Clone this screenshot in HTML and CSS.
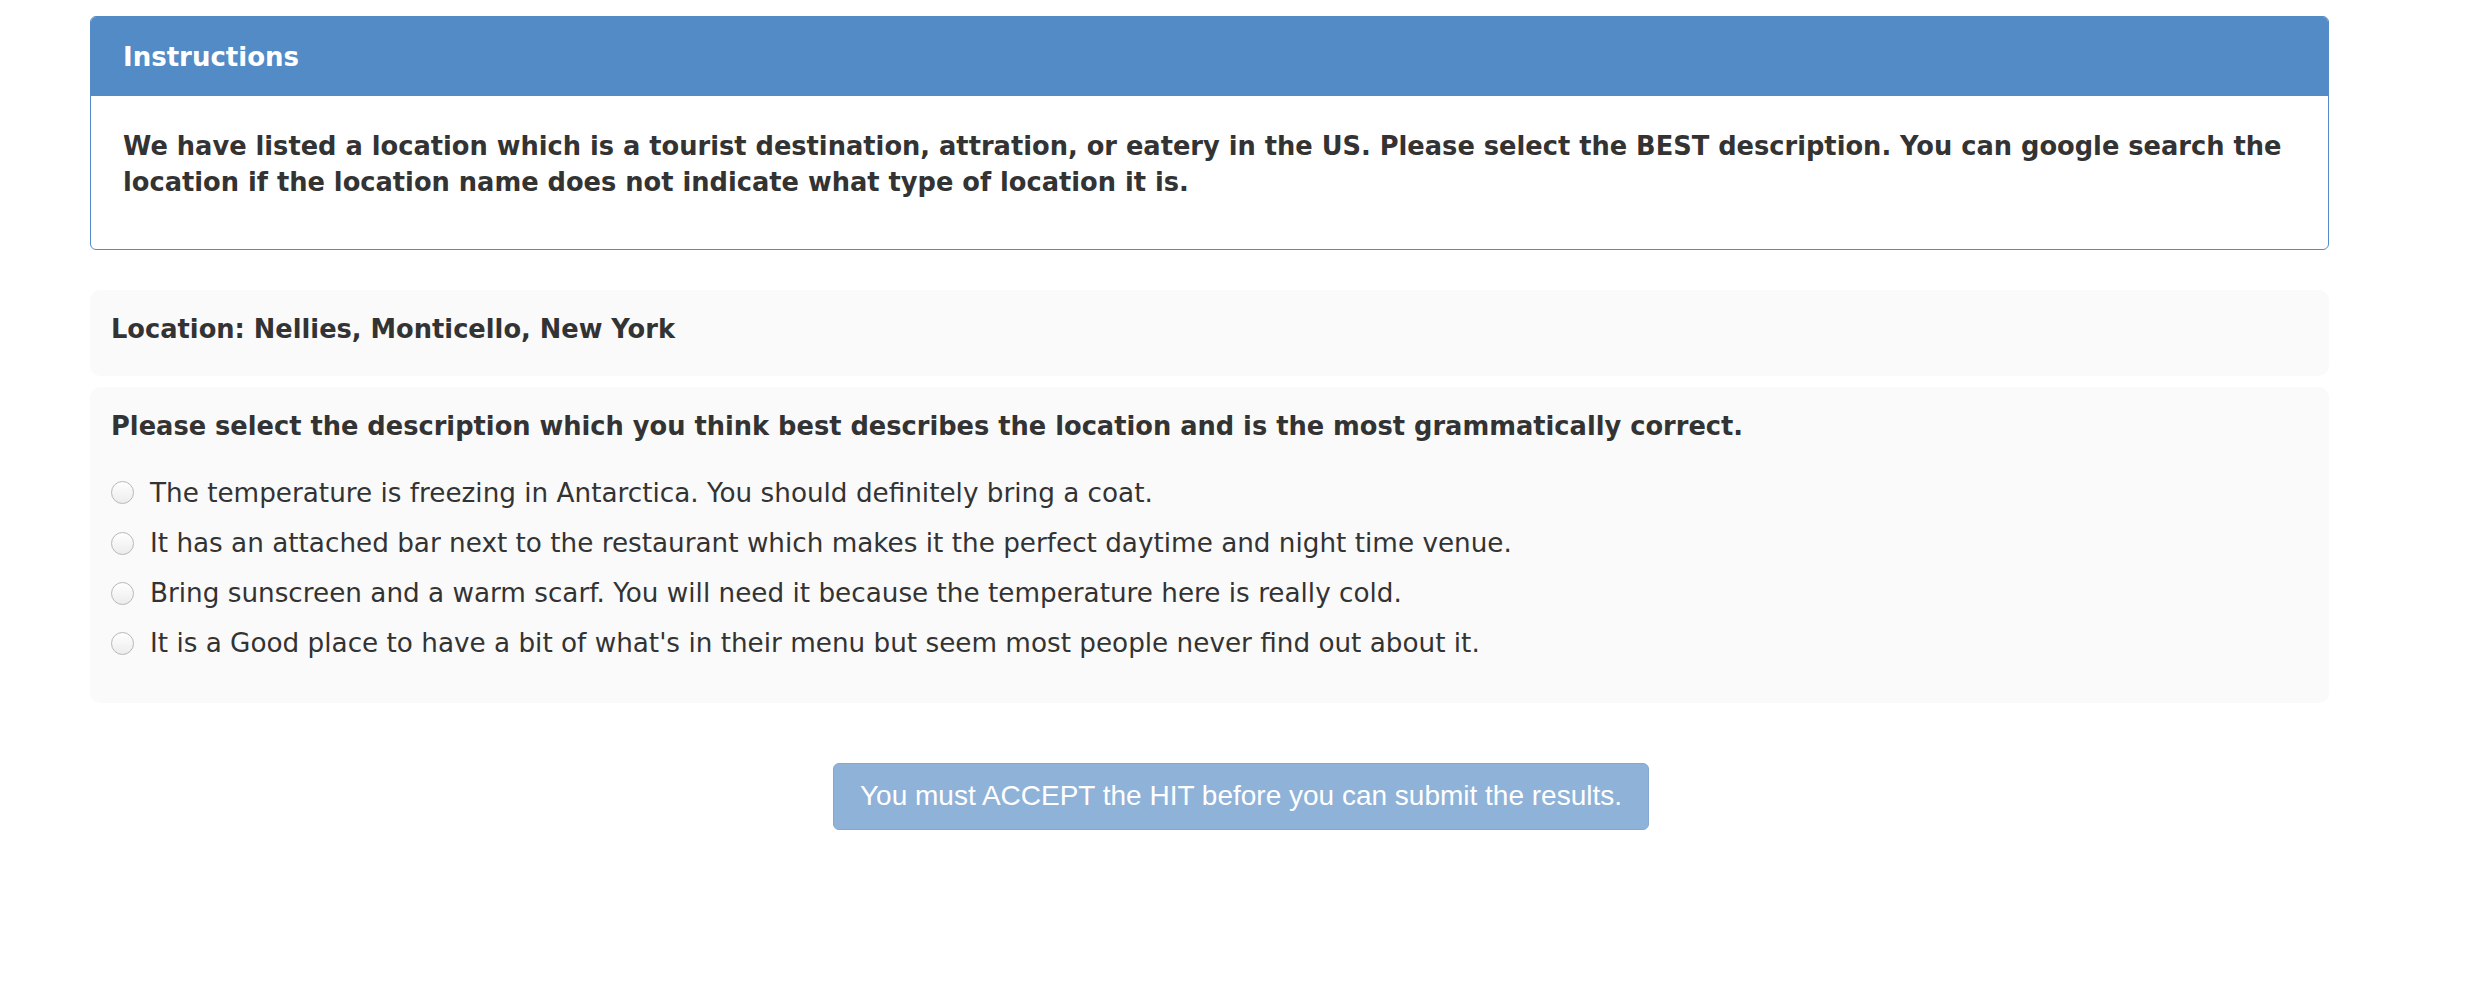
FILE: index.html
```html
<!DOCTYPE html>
<html>
<head>
<meta charset="utf-8">
<title>HIT</title>
<link rel="stylesheet" href="styles.css">
</head>
<body>
<div class="container">
  <section class="panel">
    <div class="panel-heading">Instructions</div>
    <div class="panel-body">
      <p>We have listed a location which is a tourist destination, attration, or eatery in the US. Please select the BEST description. You can google search the location if the location name does not indicate what type of location it is.</p>
    </div>
  </section>
  <div class="well well-location">
    <p class="strong">Location: Nellies, Monticello, New York</p>
  </div>
  <div class="well well-question">
    <p class="strong">Please select the description which you think best describes the location and is the most grammatically correct.</p>
    <div class="options">
      <label class="option"><span class="radio"></span><span>The temperature is freezing in Antarctica. You should definitely bring a coat.</span></label>
      <label class="option"><span class="radio"></span><span>It has an attached bar next to the restaurant which makes it the perfect daytime and night time venue.</span></label>
      <label class="option"><span class="radio"></span><span>Bring sunscreen and a warm scarf. You will need it because the temperature here is really cold.</span></label>
      <label class="option"><span class="radio"></span><span>It is a Good place to have a bit of what's in their menu but seem most people never find out about it.</span></label>
    </div>
  </div>
</div>
<div class="submit-row">
  <button class="btn-submit" disabled>You must ACCEPT the HIT before you can submit the results.</button>
</div>
</body>
</html>
```

FILE: styles.css
```css
html, body {
  margin: 0;
  padding: 0;
  background: #ffffff;
}
body {
  font-family: "DejaVu Sans", Verdana, sans-serif;
  color: #333333;
}
p {
  margin: 0;
}
.container {
  margin-left: 90px;
  width: 2239px;
  padding-top: 16px;
}
.panel {
  border: 1px solid #528bc6;
  border-radius: 6px;
  overflow: hidden;
}
.panel-heading {
  background: #528bc6;
  color: #ffffff;
  font-weight: bold;
  font-size: 26px;
  line-height: 30px;
  padding: 25px 32px 24px;
}
.panel-body {
  padding: 32px 32px 48px;
  font-weight: bold;
  font-size: 25.7px;
  line-height: 36.4px;
}
.well {
  background: #fafafa;
  border-radius: 10px;
  padding: 22px 21px;
}
.well-location {
  margin-top: 40px;
  padding-top: 21px;
  padding-bottom: 29px;
}
.well-question {
  margin-top: 11px;
  padding-top: 21px;
  padding-bottom: 34px;
}
.strong {
  font-weight: bold;
  font-size: 25.7px;
  line-height: 36px;
}
.options {
  display: flex;
  flex-direction: column;
  margin-top: 24px;
}
.option {
  display: flex;
  align-items: center;
  height: 50.2px;
  font-size: 26.25px;
  gap: 16px;
}
.radio {
  box-sizing: border-box;
  width: 23px;
  height: 23px;
  border-radius: 50%;
  border: 1px solid #b8b8b8;
  background: linear-gradient(#ffffff, #ececec);
  flex: none;
}
.submit-row {
  display: flex;
  justify-content: center;
  padding-top: 60px;
}
.btn-submit {
  font-family: "Liberation Sans", Arial, sans-serif;
  font-size: 28px;
  color: #ffffff;
  background: #8fb2d9;
  border: 1px solid #84a8d2;
  border-radius: 6px;
  height: 67px;
  padding: 0 26px;
  cursor: not-allowed;
}
```
